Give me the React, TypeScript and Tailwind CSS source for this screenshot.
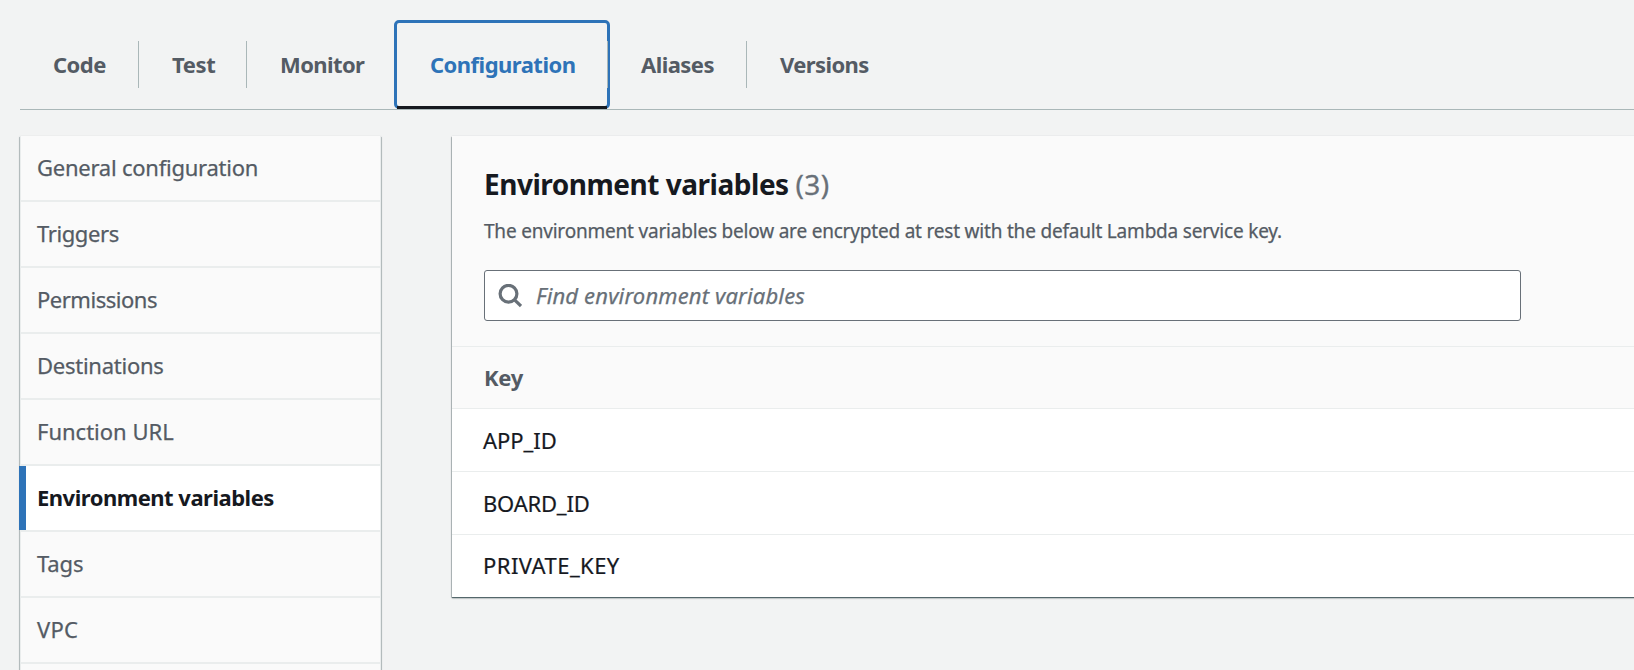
const tabs = [
  { label: "Code", box: "w-[119px] tracking-[-0.5px]" },
  { label: "Test", box: "w-[108px] tracking-[-0.4px]" },
  { label: "Monitor", box: "w-[150px] tracking-[-0.6px]" },
  { label: "Configuration", box: "w-[211px] tracking-[-0.52px]", active: true },
  { label: "Aliases", box: "w-[139px] tracking-[-0.55px]" },
  { label: "Versions", box: "w-[150px] tracking-[-0.6px]", last: true },
];

const navItems = [
  { label: "General configuration", tracking: "tracking-[-0.24px]" },
  { label: "Triggers", tracking: "tracking-[-0.4px]" },
  { label: "Permissions", tracking: "tracking-[-0.48px]" },
  { label: "Destinations", tracking: "tracking-[-0.25px]" },
  { label: "Function URL", tracking: "tracking-[0px]" },
  { label: "Environment variables", tracking: "tracking-[-0.5px]", active: true },
  { label: "Tags", tracking: "tracking-[-0.1px]" },
  { label: "VPC", tracking: "tracking-[0.2px]" },
];

const rows = [
  { key: "APP_ID", tracking: "tracking-[-0.05px]" },
  { key: "BOARD_ID", tracking: "tracking-[-0.2px]" },
  { key: "PRIVATE_KEY", tracking: "tracking-[0.45px]" },
];

function Tabs() {
  return (
    <nav className="ml-5 flex h-[110px] shrink-0 border-b border-[#aab7b8] pt-5 font-bold">
      {tabs.map((t) => (
        <div key={t.label} className={`relative flex h-[89px] shrink-0 items-center pb-[2px] pl-[33px] ${t.box}`}>
          {t.active && (
            <span className="absolute inset-y-0 -left-[3px] -right-[2px] rounded-[5px] border-[3px] border-[#2e73b8]">
              <span className="absolute inset-x-0 -bottom-[3px] h-[3px] bg-[#16191f]" />
            </span>
          )}
          <span className={t.active ? "text-[#2e73b8]" : "text-[#545b64]"}>{t.label}</span>
          {!t.last && <span className="absolute right-0 top-[21px] h-[47px] w-px bg-[#aab7b8]" />}
        </div>
      ))}
    </nav>
  );
}

function SideNav() {
  return (
    <aside className="h-[620px] w-[361px] shrink-0 border-x border-[#eaeded] bg-[#fafafa] shadow-[-1px_1px_0_rgba(0,28,36,0.18),1px_1px_0_rgba(0,28,36,0.18),0_1px_2px_rgba(0,28,36,0.3)] [clip-path:inset(-1px_-4px_0_-4px)]">
      {navItems.map((n) => (
        <div
          key={n.label}
          className={`relative flex h-[66px] items-center border-b-2 border-[#eaeded] pb-[2px] pl-4 ${n.tracking} ${
            n.active ? "bg-white font-bold text-[#16191f]" : "text-[#545b64] [-webkit-text-stroke:0.25px]"
          }`}
        >
          {n.active && <span className="absolute inset-y-0 -left-[2px] w-[7px] bg-[#2e73b8]" />}
          {n.label}
        </div>
      ))}
    </aside>
  );
}

function SearchIcon() {
  return (
    <svg className="ml-[13px] size-6 shrink-0" viewBox="0 0 24 24" fill="none" stroke="#687078" strokeWidth="3.2">
      <circle cx="10.5" cy="9.8" r="8.4" />
      <path d="M16.3 15.6 23 22" />
    </svg>
  );
}

function VariablesPanel() {
  return (
    <main className="w-[1200px] shrink-0 self-start bg-white shadow-[-1px_1px_0_rgba(0,28,36,0.12),0_1px_1px_rgba(0,28,36,0.45),0_1px_2px_rgba(0,28,36,0.4)]">
      <header className="h-[211px] border-b border-[#eaeded] bg-[#fafafa] pl-8 pt-7">
        <h2 className="h-10 text-[28px] leading-10 font-bold tracking-[-0.48px] text-[#16191f]">
          Environment variables{" "}
          <span className="font-normal tracking-[0.4px] text-[#687078] [-webkit-text-stroke:0.3px]">(3)</span>
        </h2>
        <p className="mt-[14px] h-[26px] text-[19px] leading-[26px] tracking-[-0.2px] text-[#545b64] [-webkit-text-stroke:0.25px]">
          The environment variables below are encrypted at rest with the default Lambda service key.
        </p>
        <div className="mt-[26px] flex h-[51px] w-[1037px] items-center rounded-[3px] border border-[#687078] bg-white">
          <SearchIcon />
          <span className="ml-[14px] pb-[2px] tracking-[0.15px] text-[#687078] italic [-webkit-text-stroke:0.25px]">
            Find environment variables
          </span>
        </div>
      </header>
      <div className="flex h-[62px] items-center border-b border-[#eaeded] bg-[#fafafa] pb-[2px] pl-8 font-bold tracking-[-0.3px] text-[#545b64]">
        Key
      </div>
      {rows.map((r) => (
        <div
          key={r.key}
          className={`flex h-[63px] items-center border-b border-[#eaeded] pl-[31px] text-[#16191f] [-webkit-text-stroke:0.2px] last:h-[62px] last:border-b-0 last:pb-[2px] ${r.tracking}`}
        >
          {r.key}
        </div>
      ))}
    </main>
  );
}

export default function App() {
  return (
    <div className="flex h-[670px] w-full flex-col overflow-hidden bg-[#f2f3f3] font-['Noto_Sans',sans-serif] text-[22px] leading-[30px] whitespace-nowrap">
      <Tabs />
      <div className="flex gap-[71px] pl-5 pt-[26px]">
        <SideNav />
        <VariablesPanel />
      </div>
    </div>
  );
}
